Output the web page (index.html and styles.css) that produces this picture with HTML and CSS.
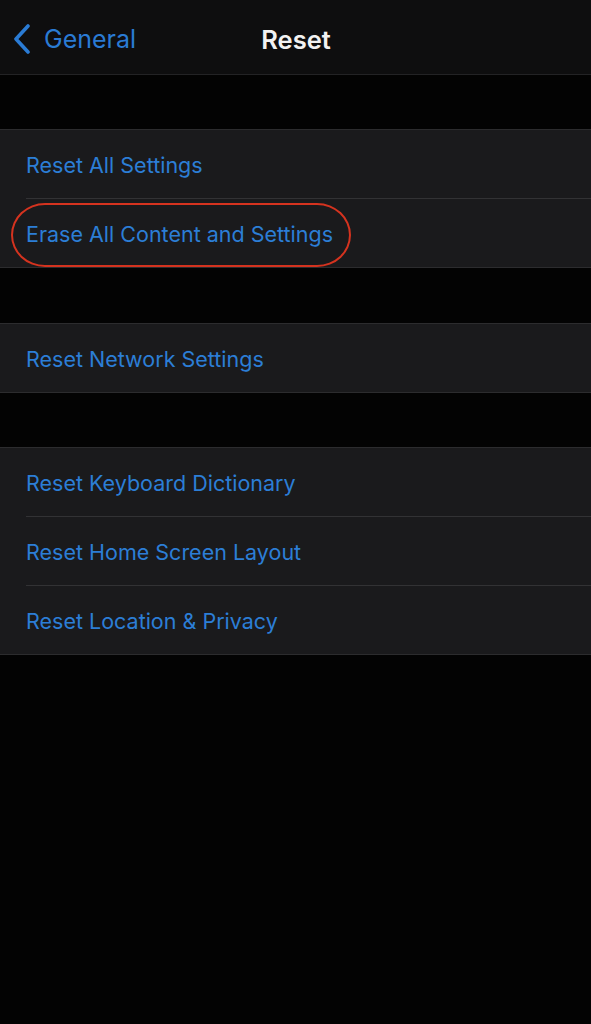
FILE: index.html
```html
<!DOCTYPE html>
<html lang="en">
<head>
<meta charset="utf-8">
<link rel="stylesheet" href="styles.css">
</head>
<body>
<div class="screen">
  <header class="nav">
    <div class="back">
      <svg class="chev" width="20" height="30" viewBox="0 0 20 30"><path d="M16 2 L4 15 L16 28" fill="none" stroke="#2a7bd4" stroke-width="3.6" stroke-linecap="round" stroke-linejoin="round"/></svg>
      <span class="back-label">General</span>
    </div>
    <h1 class="title">Reset</h1>
  </header>

  <section class="group g1">
    <div class="row"><span>Reset All Settings</span></div>
    <div class="row highlighted"><span>Erase All Content and Settings</span><div class="oval"></div></div>
  </section>

  <section class="group g2">
    <div class="row"><span>Reset Network Settings</span></div>
  </section>

  <section class="group g3">
    <div class="row"><span>Reset Keyboard Dictionary</span></div>
    <div class="row"><span>Reset Home Screen Layout</span></div>
    <div class="row"><span>Reset Location &amp; Privacy</span></div>
  </section>
</div>
</body>
</html>
```

FILE: styles.css
```css
* { box-sizing: border-box; margin: 0; padding: 0; }
html, body { background: #030303; }
body { width: 591px; height: 1024px; overflow: hidden; font-family: Inter, "Noto Sans", "Liberation Sans", sans-serif; }
.screen { display: flex; flex-direction: column; }
.nav {
  height: 75px;
  background: #0e0e0f;
  border-bottom: 1px solid #232325;
  position: relative;
  display: flex;
  align-items: center;
  justify-content: center;
}
.back {
  position: absolute;
  left: 12px;
  top: 24px;
  display: flex;
  align-items: center;
  gap: 12px;
}
.chev { display: block; }
.back-label { color: #2a7bd4; font-size: 25px; }
.title { color: #f2f2f2; font-size: 25.5px; font-weight: 600; margin-left: 1px; margin-top: 4px; }
.group {
  background: #1a1a1c;
  border-top: 1px solid #2c2c2e;
  border-bottom: 1px solid #2c2c2e;
}
.g1 { margin-top: 54px; }
.g2 { margin-top: 55px; }
.g3 { margin-top: 54px; }
.row {
  height: 68px;
  margin-left: 26px;
  padding-top: 2px;
  display: flex;
  align-items: center;
  color: #2c7ed6;
  font-size: 21.5px;
  position: relative;
}
.row + .row { border-top: 1px solid #323234; height: 69px; }
.oval {
  position: absolute;
  left: -15px;
  top: 4px;
  width: 340px;
  height: 64px;
  border: 2.5px solid #d5331f;
  border-radius: 34px / 32px;
}
```
